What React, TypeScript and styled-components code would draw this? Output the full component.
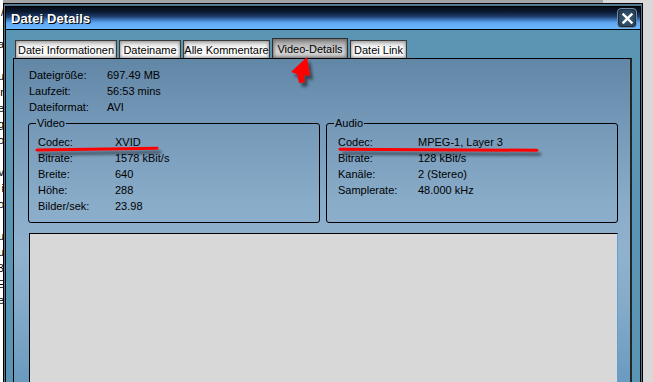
import React from "react";
import styled, { createGlobalStyle } from "styled-components";

const GlobalStyle = createGlobalStyle`
  html, body { margin: 0; padding: 0; }
  body {
    width: 653px;
    height: 382px;
    overflow: hidden;
    background: #d8d8d8;
    font-family: "Liberation Sans", Arial, sans-serif;
    font-size: 11px;
    color: #000;
  }
`;

const Desktop = styled.div`
  position: relative;
  width: 653px;
  height: 382px;
  overflow: hidden;
  background: #d8d8d8;
`;

const BehindTop = styled.div`
  position: absolute;
  left: 0;
  top: 0;
  width: 603px;
  height: 3px;
  background: #a4a4a4;
`;

const BehindLeft = styled.div`
  position: absolute;
  left: 0;
  top: 0;
  width: 3px;
  height: 382px;
  background: #fff;
  overflow: hidden;
`;

const BehindLines = styled.div`
  margin-left: -40px;
  width: 44px;
  text-align: right;
  font-size: 11px;
  line-height: 16px;
  padding-top: 4px;
  white-space: nowrap;
`;

const Window = styled.div`
  position: absolute;
  left: 3px;
  top: 3px;
  width: 640px;
  height: 400px;
  box-sizing: border-box;
  border: 1px solid #000;
  background: #55778f;
  padding: 2px 1px 0 1px;
`;

const Frame = styled.div`
  box-sizing: border-box;
  height: 100%;
  border: 1px solid #000;
  border-bottom: none;
  display: flex;
  flex-direction: column;
`;

const TitleBar = styled.div`
  box-sizing: border-box;
  height: 23px;
  border-bottom: 1px solid #000;
  background: linear-gradient(
    to bottom,
    #050b16 0%,
    #0b1a32 22%,
    #1d3a66 42%,
    #3f78bd 58%,
    #5fa8f2 72%,
    #6bb7ff 100%
  );
  display: flex;
  align-items: center;
  justify-content: space-between;
  padding: 0 3px 0 5px;
`;

const Title = styled.span`
  font-family: "Liberation Sans", Arial, sans-serif;
  font-weight: bold;
  font-size: 13px;
  color: #fff;
  text-shadow: 1px 1px 0 #000, 1px 0 0 #1a2a40;
  letter-spacing: 0.1px;
`;

const CloseButton = styled.div`
  box-sizing: border-box;
  width: 20px;
  height: 20px;
  border-radius: 4px;
  border: 1px solid #6f8ea6;
  background: radial-gradient(circle at 50% 55%, #3d5d7a 0%, #2a4660 60%, #1e3449 100%);
  display: flex;
  align-items: center;
  justify-content: center;
  box-shadow: inset 0 0 0 1px #1b2c3c;
`;

const Body = styled.div`
  flex: 1;
  background: #5a96b4;
  padding: 8px 8px 0 7px;
`;

const TabRow = styled.div`
  display: flex;
  align-items: flex-end;
  gap: 2px;
  height: 20px;
  padding-left: 2px;
`;

const Tab = styled.div<{ $active?: boolean; $w: number }>`
  box-sizing: border-box;
  width: ${(p) => p.$w}px;
  height: ${(p) => (p.$active ? 20 : 18)}px;
  border: 1px solid ${(p) => (p.$active ? "#2e2e2e" : "#3a3a3a")};
  border-bottom: none;
  background: ${(p) =>
    p.$active
      ? "linear-gradient(to bottom, #8a8a8a 0%, #bdbdbd 35%, #d4d4d4 65%, #c2c2c2 100%)"
      : "linear-gradient(to bottom, #c8c8c8 0%, #f4f4f4 35%, #ffffff 70%, #f6f6f6 100%)"};
  box-shadow: ${(p) =>
    p.$active ? "inset 0 0 3px 1px #6e6e6e" : "inset 0 0 3px 1px #9c9c9c"};
  display: flex;
  align-items: center;
  justify-content: center;
  font-size: 11px;
  white-space: nowrap;
  color: #000;
`;

const Panel = styled.div`
  box-sizing: border-box;
  height: 340px;
  border: 1px solid #000;
  border-right: 2px solid #262626;
  border-bottom: none;
  background: linear-gradient(
    to bottom,
    #6286a5 0px,
    #7397b6 60px,
    #88abc8 140px,
    #90b2cd 190px,
    #86acca 240px,
    #6a9abf 324px
  );
  padding: 8px 12px 0 15px;
`;

const InfoRow = styled.div<{ $labelW?: number }>`
  display: flex;
  align-items: center;
  height: 16px;
  white-space: nowrap;
`;

const Label = styled.span<{ $w: number }>`
  width: ${(p) => p.$w}px;
  flex: none;
`;

const Value = styled.span``;

const GroupRow = styled.div`
  display: grid;
  grid-template-columns: 1fr 1fr;
  gap: 6px;
  margin: 2px 0 0 -1px;
`;

const Group = styled.fieldset<{ $inset: number }>`
  margin: 0;
  min-width: 0;
  border: 1px solid #000;
  border-radius: 3px;
  padding: 4px 0 8px ${(p) => p.$inset}px;
`;

const Legend = styled.legend<{ $shift: number }>`
  padding: 0 1px;
  margin-left: ${(p) => p.$shift}px;
  line-height: 13px;
  font-size: 11px;
`;

const ContentArea = styled.div`
  margin-top: 10px;
  height: 200px;
  background: #d8d8d8;
  border-top: 1px solid #000;
  border-left: 1px solid #000;
  border-right: 1px solid #5ea2d4;
`;

const Overlay = styled.svg`
  position: absolute;
  left: 0;
  top: 0;
  pointer-events: none;
`;

const fileInfo: [string, string][] = [
  ["Dateigröße:", "697.49 MB"],
  ["Laufzeit:", "56:53 mins"],
  ["Dateiformat:", "AVI"],
];

const videoInfo: [string, string][] = [
  ["Codec:", "XVID"],
  ["Bitrate:", "1578 kBit/s"],
  ["Breite:", "640"],
  ["Höhe:", "288"],
  ["Bilder/sek:", "23.98"],
];

const audioInfo: [string, string][] = [
  ["Codec:", "MPEG-1, Layer 3"],
  ["Bitrate:", "128 kBit/s"],
  ["Kanäle:", "2 (Stereo)"],
  ["Samplerate:", "48.000 kHz"],
];

const tabs: { label: string; w: number; active?: boolean }[] = [
  { label: "Datei Informationen", w: 102 },
  { label: "Dateiname", w: 62 },
  { label: "Alle Kommentare", w: 87 },
  { label: "Video-Details", w: 76, active: true },
  { label: "Datei Link", w: 57 },
];

function Rows({ rows, labelW }: { rows: [string, string][]; labelW: number }) {
  return (
    <>
      {rows.map(([l, v]) => (
        <InfoRow key={l}>
          <Label $w={labelW}>{l}</Label>
          <Value>{v}</Value>
        </InfoRow>
      ))}
    </>
  );
}

export default function App() {
  return (
    <Desktop>
      <GlobalStyle />
      <BehindTop />
      <BehindLeft>
        <BehindLines>
          <div>/</div>
          <div>&nbsp;</div>
          <div>a</div>
          <div>&nbsp;</div>
          <div>u</div>
          <div>r</div>
          <div>e</div>
          <div>g</div>
          <div>o</div>
          <div>&nbsp;</div>
          <div>v</div>
          <div>i</div>
          <div>o</div>
          <div>&nbsp;</div>
          <div>u</div>
          <div>u</div>
          <div>B</div>
          <div>E</div>
          <div>e</div>
        </BehindLines>
      </BehindLeft>
      <Window>
        <Frame>
          <TitleBar>
            <Title>Datei Details</Title>
            <CloseButton>
              <svg width="11" height="11" viewBox="0 0 11 11">
                <path
                  d="M1.5 1.5 L9.5 9.5 M9.5 1.5 L1.5 9.5"
                  stroke="#fff"
                  strokeWidth="2.4"
                  strokeLinecap="square"
                />
              </svg>
            </CloseButton>
          </TitleBar>
          <Body>
            <TabRow>
              {tabs.map((t) => (
                <Tab key={t.label} $w={t.w} $active={t.active}>
                  {t.label}
                </Tab>
              ))}
            </TabRow>
            <Panel>
              <Rows rows={fileInfo} labelW={78} />
              <GroupRow>
                <Group $inset={9}>
                  <Legend $shift={-2}>Video</Legend>
                  <Rows rows={videoInfo} labelW={77} />
                </Group>
                <Group $inset={11}>
                  <Legend $shift={-4}>Audio</Legend>
                  <Rows rows={audioInfo} labelW={80} />
                </Group>
              </GroupRow>
              <ContentArea />
            </Panel>
          </Body>
        </Frame>
      </Window>
      <Overlay width="653" height="382" viewBox="0 0 653 382">
        <defs>
          <filter
            id="annShadow"
            filterUnits="userSpaceOnUse"
            x="0"
            y="0"
            width="653"
            height="382"
          >
            <feGaussianBlur in="SourceAlpha" stdDeviation="1.6" />
            <feOffset dx="3" dy="4" result="off" />
            <feComponentTransfer>
              <feFuncA type="linear" slope="0.5" />
            </feComponentTransfer>
            <feMerge>
              <feMergeNode />
              <feMergeNode in="SourceGraphic" />
            </feMerge>
          </filter>
        </defs>
        <g filter="url(#annShadow)">
          <line x1="37" y1="150" x2="157" y2="148.3" stroke="#ff0000" strokeWidth="3" strokeLinecap="round" />
          <line x1="340" y1="149.3" x2="537" y2="150.3" stroke="#ff0000" strokeWidth="3" strokeLinecap="round" />
          <polygon points="307,57 291,72 297,74 299,83 305,82 304,75 310,76" fill="#ff0000" />
        </g>
      </Overlay>
    </Desktop>
  );
}
